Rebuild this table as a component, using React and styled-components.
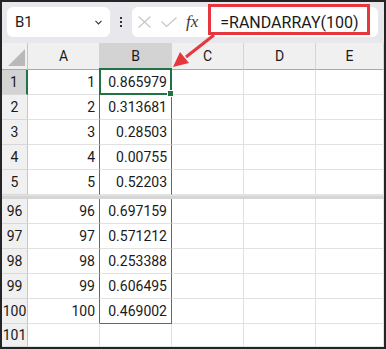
import styled, { createGlobalStyle } from "styled-components";

const GlobalStyle = createGlobalStyle`
  html, body {
    margin: 0;
    padding: 0;
    background: #fff;
  }
  * {
    box-sizing: border-box;
  }
`;

const Frame = styled.div`
  position: relative;
  width: 386px;
  height: 349px;
  border: 2px solid #242424;
  background: #fff;
  display: flex;
  flex-direction: column;
  overflow: hidden;
  font-family: Roboto, "Noto Sans CJK JP", sans-serif;
`;

const Toolbar = styled.div`
  height: 41px;
  flex-shrink: 0;
  display: flex;
  align-items: flex-start;
  padding: 5px 6px 0 5px;
  background: #e8e8ec;
`;

const NameBox = styled.div`
  width: 103px;
  height: 30px;
  display: flex;
  align-items: center;
  justify-content: space-between;
  padding: 0 8px;
  background: #fff;
  border-radius: 6px;
  font-size: 15px;
  color: #1f1f1f;
`;

const Dots = styled.div`
  width: 22px;
  height: 30px;
  display: flex;
  flex-direction: column;
  align-items: center;
  justify-content: center;
  gap: 2px;
  span {
    width: 2px;
    height: 2px;
    background: #333;
  }
`;

const FormulaBox = styled.div`
  flex: 1;
  height: 30px;
  display: flex;
  align-items: center;
  padding-left: 6px;
  background: #fff;
  border-radius: 6px;
  svg {
    flex-shrink: 0;
  }
`;

const Fx = styled.span`
  margin-left: 9px;
  font-family: "Liberation Serif", serif;
  font-style: italic;
  font-size: 17px;
  color: #3a3a3a;
`;

const FormulaText = styled.span`
  margin-left: 22px;
  font-size: 16px;
  color: #1a1a1a;
`;

const Callout = styled.div`
  position: absolute;
  left: 206px;
  top: 2px;
  width: 162px;
  height: 31px;
  border: 3px solid #e5373d;
  pointer-events: none;
`;

const Arrow = styled.svg`
  position: absolute;
  left: -2px;
  top: -2px;
  pointer-events: none;
`;

const Sheet = styled.div`
  flex: 1;
  display: flex;
  flex-direction: column;
  font-size: 14px;
  color: #1a1a1a;
`;

const Row = styled.div`
  display: grid;
  grid-template-columns: 26px 72px 72px 72px 72px 1fr;
  height: ${(p) => p.$h || 25}px;
  flex-shrink: 0;
  ${(p) => p.$grow && "flex: 1;"}
`;

const Corner = styled.div`
  background: #f0f0f0;
  border-right: 1px solid #c6c6c6;
  border-bottom: 1px solid #a9a9a9;
  display: flex;
  align-items: flex-end;
  justify-content: flex-end;
  padding: 0 2px 3px 0;
`;

const ColHead = styled.div`
  display: flex;
  align-items: center;
  justify-content: center;
  background: ${(p) => (p.$active ? "#d3d3d3" : "#f0f0f0")};
  border-right: 1px solid #d4d4d4;
  border-bottom: 1px solid ${(p) => (p.$active ? "#217346" : "#a9a9a9")};
`;

const RowHead = styled.div`
  display: flex;
  align-items: center;
  justify-content: center;
  background: ${(p) => (p.$active ? "#d3d3d3" : "#f0f0f0")};
  border-right: ${(p) => (p.$active ? "2px solid #217346" : "1px solid #c6c6c6")};
  border-bottom: 1px solid #d8d8d8;
`;

const Cell = styled.div`
  position: relative;
  display: flex;
  align-items: center;
  justify-content: flex-end;
  padding-right: 4px;
  border-right: 1px solid ${(p) => (p.$spillEdge ? "#3f6db8" : "#e1e1e1")};
  border-bottom: 1px solid ${(p) => (p.$spillBottom ? "#3f6db8" : "#e1e1e1")};
  ${(p) =>
    p.$selected &&
    `
    &::after {
      content: "";
      position: absolute;
      top: -2px;
      left: -1px;
      right: -1px;
      bottom: -1px;
      border: 2px solid #217346;
    }
    &::before {
      content: "";
      position: absolute;
      right: -3px;
      bottom: -3px;
      width: 5px;
      height: 5px;
      background: #217346;
      border: 1px solid #fff;
      z-index: 1;
    }
  `}
`;

const Split = styled.div`
  height: 4px;
  flex-shrink: 0;
  background: #d5d5d5;
  border-top: 1px solid #e2e2e2;
`;

const topRows = [
  [1, "0.865979"],
  [2, "0.313681"],
  [3, "0.28503"],
  [4, "0.00755"],
  [5, "0.52203"],
];

const bottomRows = [
  [96, "0.697159"],
  [97, "0.571212"],
  [98, "0.253388"],
  [99, "0.606495"],
  [100, "0.469002"],
];

const cols = ["A", "B", "C", "D", "E"];

function DataRow({ n, value, selected, last }) {
  return (
    <Row>
      <RowHead $active={selected}>{n}</RowHead>
      <Cell $spillEdge>{n}</Cell>
      <Cell $spillEdge $spillBottom={last} $selected={selected}>
        {value}
      </Cell>
      <Cell />
      <Cell />
      <Cell />
    </Row>
  );
}

export default function App() {
  return (
    <>
      <GlobalStyle />
      <Frame>
        <Toolbar>
          <NameBox>
            <span>B1</span>
            <svg width="7" height="5" viewBox="0 0 7 5">
              <path d="M0.5 0.8 L3.5 4 L6.5 0.8" fill="none" stroke="#333" strokeWidth="1.1" />
            </svg>
          </NameBox>
          <Dots>
            <span />
            <span />
            <span />
          </Dots>
          <FormulaBox>
            <svg width="13" height="12" viewBox="0 0 13 12">
              <path d="M0.5 0.5 L12.5 11.5 M12.5 0.5 L0.5 11.5" stroke="#c4c4c4" strokeWidth="1.1" />
            </svg>
            <svg width="16" height="10" viewBox="0 0 16 10" style={{ marginLeft: 10 }}>
              <path d="M0.5 4.5 L5.5 9.5 L15.5 0.5" fill="none" stroke="#c4c4c4" strokeWidth="1.1" />
            </svg>
            <Fx>fx</Fx>
            <FormulaText>=RANDARRAY(100)</FormulaText>
          </FormulaBox>
        </Toolbar>
        <Sheet>
          <Row $h={27}>
            <Corner>
              <svg width="17" height="17" viewBox="0 0 17 17">
                <polygon points="17,0 17,17 0,17" fill="#b9b9b9" />
              </svg>
            </Corner>
            {cols.map((c) => (
              <ColHead key={c} $active={c === "B"}>
                {c}
              </ColHead>
            ))}
          </Row>
          {topRows.map(([n, v]) => (
            <DataRow key={n} n={n} value={v} selected={n === 1} />
          ))}
          <Split />
          {bottomRows.map(([n, v]) => (
            <DataRow key={n} n={n} value={v} last={n === 100} />
          ))}
          <Row $grow>
            <RowHead>101</RowHead>
            <Cell />
            <Cell />
            <Cell />
            <Cell />
            <Cell />
          </Row>
        </Sheet>
        <Callout />
        <Arrow width="386" height="349" viewBox="0 0 386 349">
          <line x1="214" y1="35" x2="186" y2="57" stroke="#e5373d" strokeWidth="3" />
          <polygon points="173,67 189,63 180,52" fill="#e5373d" />
        </Arrow>
      </Frame>
    </>
  );
}
